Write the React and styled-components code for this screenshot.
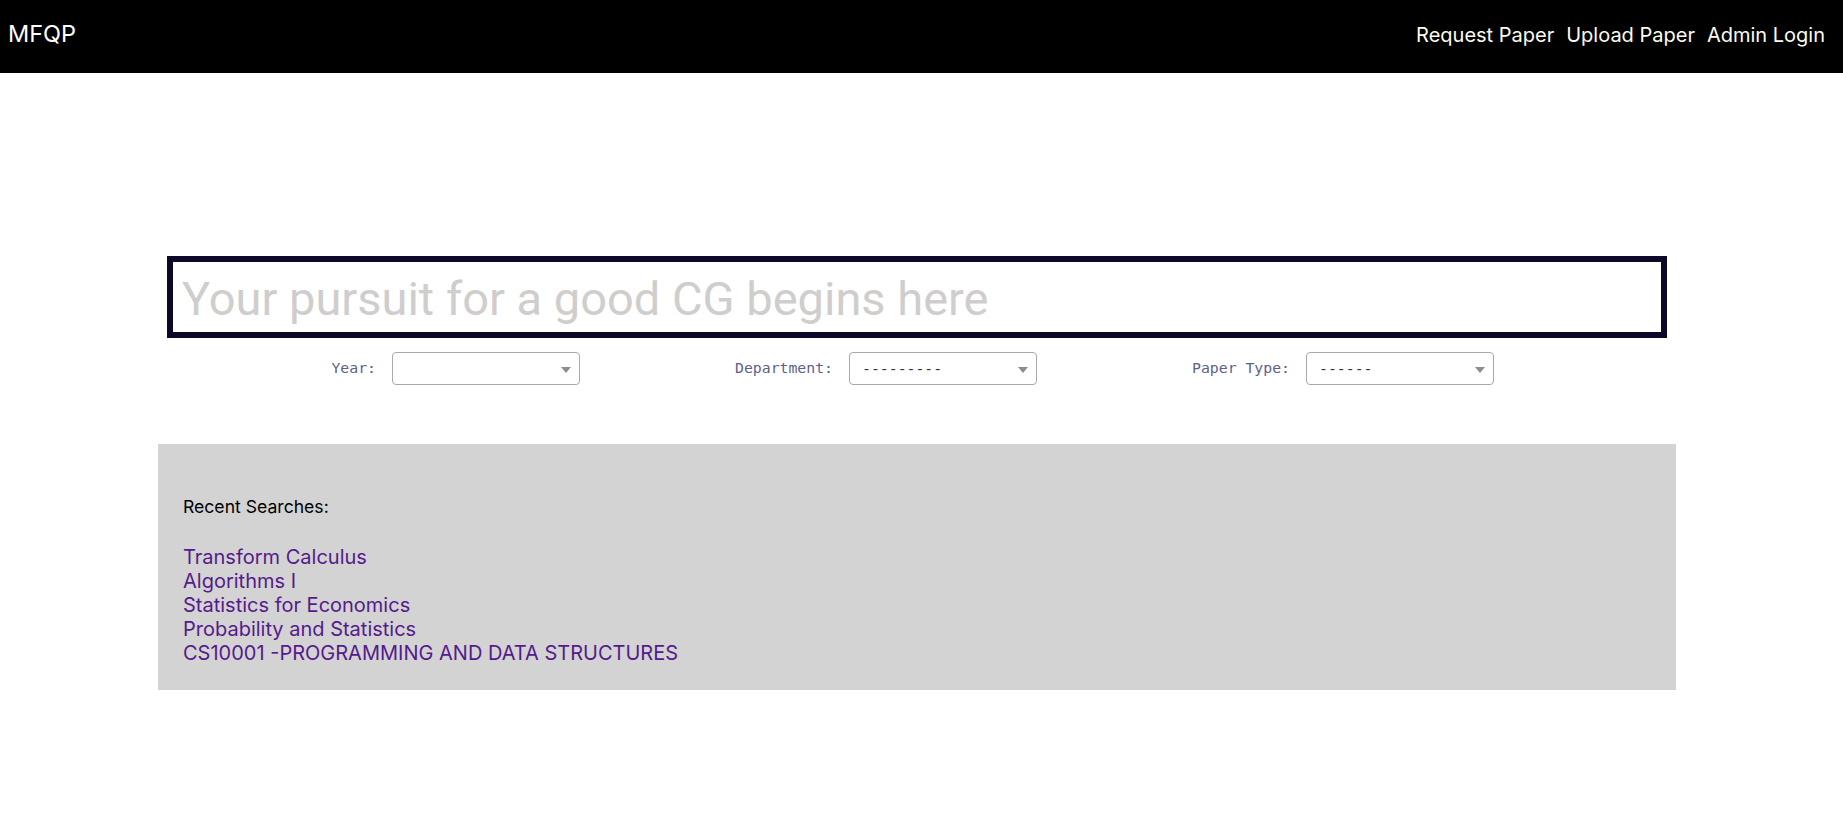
import React from "react";
import styled, { createGlobalStyle } from "styled-components";

const GlobalStyle = createGlobalStyle`
  * { box-sizing: border-box; }
  body {
    margin: 0;
    background: #ffffff;
    font-family: Inter, "Noto Sans", sans-serif;
  }
`;

const recent = [
  "Transform Calculus",
  "Algorithms I",
  "Statistics for Economics",
  "Probability and Statistics",
  "CS10001 -PROGRAMMING AND DATA STRUCTURES",
];

const filters = [
  { label: "Year:", value: "" },
  { label: "Department:", value: "---------" },
  { label: "Paper Type:", value: "------" },
];

const App = () => {
  return (
    <>
      <GlobalStyle />
      <Navbar>
        <Logo>MFQP</Logo>
        <NavLinks>
          <NavLink href="#request">Request Paper</NavLink>
          <NavLink href="#upload">Upload Paper</NavLink>
          <NavLink href="#admin">Admin Login</NavLink>
        </NavLinks>
      </Navbar>
      <Main>
        <SearchBox placeholder="Your pursuit for a good CG begins here" />
        <FilterRow>
          {filters.map((f) => (
            <FilterGroup key={f.label}>
              <FilterLabel>{f.label}</FilterLabel>
              <Select>
                <span>{f.value}</span>
              </Select>
            </FilterGroup>
          ))}
        </FilterRow>
        <RecentPanel>
          <RecentTitle>Recent Searches:</RecentTitle>
          <RecentList>
            {recent.map((r) => (
              <li key={r}>
                <RecentLink href="#">{r}</RecentLink>
              </li>
            ))}
          </RecentList>
        </RecentPanel>
      </Main>
    </>
  );
};

const Navbar = styled.nav`
  height: 73px;
  background: #000;
  display: flex;
  align-items: center;
  justify-content: space-between;
  padding: 0 18px 6px 8px;
`;

const Logo = styled.div`
  color: #fff;
  font-size: 23.5px;
  font-weight: 400;
`;

const NavLinks = styled.div`
  display: flex;
  gap: 12px;
  padding-top: 2px;
`;

const NavLink = styled.a`
  color: #fdfbee;
  text-decoration: none;
  font-size: 20px;
`;

const Main = styled.main`
  padding-top: 183px;
  padding-bottom: 40px;
`;

const SearchBox = styled.input`
  display: block;
  width: 1500px;
  height: 82px;
  margin-left: 167px;
  border: 6px solid #0b0828;
  padding: 3px 9px 0;
  font-family: Roboto, "Noto Sans", sans-serif;
  font-size: 47px;
  outline: none;
  &::placeholder {
    color: #d0cdcd;
  }
`;

const FilterRow = styled.div`
  display: grid;
  grid-template-columns: repeat(3, 457px);
  margin: 14px 0 0 123px;
`;

const FilterGroup = styled.div`
  display: flex;
  align-items: center;
  justify-content: flex-end;
  gap: 16px;
`;

const FilterLabel = styled.label`
  font-family: "DejaVu Sans Mono", monospace;
  font-size: 14.8px;
  color: #5e5f8d;
  padding-bottom: 3px;
`;

const Select = styled.div`
  position: relative;
  width: 188px;
  height: 33px;
  border: 1px solid #a9a9a9;
  border-radius: 4px;
  display: flex;
  align-items: center;
  padding: 0 12px;
  font-family: "DejaVu Sans Mono", monospace;
  font-size: 14.8px;
  color: #333;
  &::after {
    content: "";
    position: absolute;
    right: 8px;
    top: 14px;
    border-left: 5px solid transparent;
    border-right: 5px solid transparent;
    border-top: 6px solid #8c8c8c;
  }
`;

const RecentPanel = styled.section`
  margin: 59px 0 0 158px;
  width: 1518px;
  height: 246px;
  background: #d3d3d3;
  padding: 52px 25px 0;
`;

const RecentTitle = styled.p`
  margin: 0 0 28px;
  font-size: 17.6px;
  color: #000;
`;

const RecentList = styled.ul`
  list-style: none;
  margin: 0;
  padding: 0;
  li {
    font-size: 20px;
    line-height: 24px;
  }
`;

const RecentLink = styled.a`
  color: #551a8b;
  text-decoration: none;
`;

export default App;
